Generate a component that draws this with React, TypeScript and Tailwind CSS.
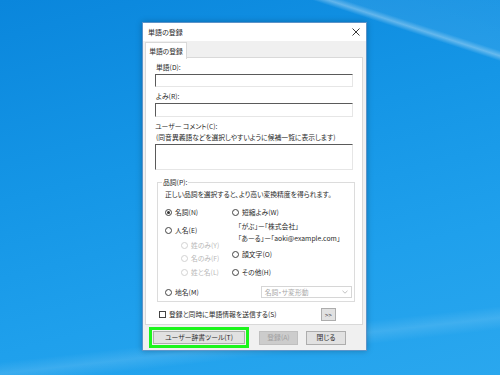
import React from "react";

const F = "[font-family:'Noto_Sans_CJK_JP','Noto_Sans',sans-serif] [font-feature-settings:'palt']";

function Radio({ checked, disabled }: { checked?: boolean; disabled?: boolean }) {
  return (
    <span
      className={`inline-flex items-center justify-center w-[7px] h-[7px] rounded-full border ${
        disabled ? "border-[#d2d2d2]" : "border-[#444]"
      } bg-white shrink-0`}
    >
      {checked && <span className="w-[3px] h-[3px] rounded-full bg-[#333]" />}
    </span>
  );
}

function RadioItem({
  label,
  checked,
  disabled,
  className = "",
}: {
  label: string;
  checked?: boolean;
  disabled?: boolean;
  className?: string;
}) {
  return (
    <div className={`flex items-center h-[9px] gap-[3px] ${className}`}>
      <Radio checked={checked} disabled={disabled} />
      <span className={`leading-[9px] ${disabled ? "text-[#b8b8b8]" : ""}`}>{label}</span>
    </div>
  );
}

function TextBox({ h }: { h: string }) {
  return (
    <div
      className={`${h} w-[198px] ml-[9px] bg-white border border-[#e6e6e6] border-t-[#5a5a5a] border-l-[#5a5a5a] border-t-[1.5px] border-l-[1.5px]`}
    />
  );
}

export default function App() {
  return (
    <div
      className={`w-[500px] h-[375px] overflow-hidden bg-[linear-gradient(18deg,transparent_88.6%,rgba(255,255,255,0.35)_89.6%,rgba(255,255,255,0.08)_90.6%,rgba(255,255,255,0.06)_100%),linear-gradient(173.6deg,transparent_84%,rgba(255,255,255,0.12)_86.7%,transparent_89.5%),linear-gradient(165deg,#0a86dc_0%,#1596e6_40%,#1fa0ec_70%,#2aa7ee_100%)] pl-[142px] pt-[22px] ${F} text-[6.8px] text-[#2a2a2a]`}
    >
      <div className="relative w-[225px] h-[329px] bg-[#f0f0f0] border border-[#5c93c8] shadow-[0_0_6px_rgba(0,0,0,0.25)] flex flex-col">
        {/* title bar */}
        <div className="h-[18px] bg-white flex items-center justify-between pl-[5px] pr-[5px] shrink-0">
          <span className="leading-[9px] text-[7px]">単語の登録</span>
          <svg width="8" height="8" viewBox="0 0 8 8" className="mr-[1px]">
            <path d="M0.5 0.5L7.5 7.5M7.5 0.5L0.5 7.5" stroke="#222" strokeWidth="0.9" />
          </svg>
        </div>
        {/* tab strip */}
        <div className="flex pl-[2px] pt-[1px] h-[17px] shrink-0">
          <div className="w-[42px] h-[17px] bg-white border border-b-0 border-[#d9d9d9] flex items-center justify-center relative z-10">
            <span className="leading-[9px]">単語の登録</span>
          </div>
        </div>
        {/* panel */}
        <div className="ml-[2px] w-[218px] h-[268px] -mt-[1px] bg-white border border-[#d9d9d9] flex flex-col shrink-0">
          <div className="mt-[5px] ml-[10px] h-[9px] leading-[9px]">単語(D):</div>
          <div className="mt-[2px]">
            <TextBox h="h-[13px]" />
          </div>
          <div className="mt-[5px] ml-[10px] h-[9px] leading-[9px]">よみ(R):</div>
          <div className="mt-[2px]">
            <TextBox h="h-[14px]" />
          </div>
          <div className="mt-[5px] ml-[9px] h-[9px] leading-[9px]">ユーザー コメント(C):</div>
          <div className="mt-[2px] ml-[10px] h-[9px] leading-[9px]">(同音異義語などを選択しやすいように候補一覧に表示します)</div>
          <div className="mt-[2px]">
            <TextBox h="h-[26px]" />
          </div>
          {/* group box */}
          <div className="relative mt-[12px] ml-[11px] w-[198px] h-[120px] border border-[#dcdcdc]">
            <span className="absolute -top-[5px] left-[4px] bg-white px-[1px] leading-[9px]">品詞(P):</span>
            <div className="mt-[7px] ml-[7px] h-[9px] leading-[9px]">正しい品詞を選択すると、より高い変換精度を得られます。</div>
            <div className="flex mt-[9px]">
              <div className="w-[74px] pl-[7px] flex flex-col">
                <RadioItem label="名詞(N)" checked />
                <RadioItem label="人名(E)" className="mt-[9px]" />
                <RadioItem label="姓のみ(Y)" disabled className="mt-[6px] ml-[16px]" />
                <RadioItem label="名のみ(F)" disabled className="mt-[4px] ml-[16px]" />
                <RadioItem label="姓と名(L)" disabled className="mt-[5px] ml-[16px]" />
              </div>
              <div className="flex flex-col">
                <RadioItem label="短縮よみ(W)" />
                <div className="mt-[5px] ml-[6px] h-[9px] leading-[9px]">「がぶ」ー「株式会社」</div>
                <div className="mt-[3px] ml-[6px] h-[9px] leading-[9px]">「あーる」ー「aoki@example.com」</div>
                <RadioItem label="顔文字(O)" className="mt-[7px]" />
                <RadioItem label="その他(H)" className="mt-[9px]" />
              </div>
            </div>
            <div className="flex items-center mt-[9px] pl-[7px]">
              <RadioItem label="地名(M)" />
              <div className="ml-[62px] w-[91px] h-[12px] border border-[#d6d6d6] bg-white flex items-center justify-between pl-[3px] pr-[3px]">
                <span className="text-[#a8a8a8] leading-[9px]">名詞・サ変形動</span>
                <svg width="6" height="4" viewBox="0 0 6 4">
                  <path d="M0.5 0.8L3 3.2L5.5 0.8" stroke="#b0b0b0" strokeWidth="0.8" fill="none" />
                </svg>
              </div>
            </div>
          </div>
          {/* checkbox row */}
          <div className="flex items-center mt-[6px] ml-[13px]">
            <span className="w-[7px] h-[7px] border border-[#444] bg-white shrink-0" />
            <span className="ml-[3px] leading-[9px]">登録と同時に単語情報を送信する(S)</span>
            <div className="ml-[44px] w-[15px] h-[13px] bg-[#e1e1e1] border border-[#adadad] flex items-center justify-center text-[6px] leading-[6px] [font-family:'Liberation_Sans',sans-serif]">
              &gt;&gt;
            </div>
          </div>
        </div>
        {/* bottom buttons */}
        <div className="flex items-center h-[25px] pl-[6px]">
          <div className="w-[100px] h-[21px] border-[3px] border-[#1cf51c] flex items-center justify-center">
            <div className="w-[92px] h-[13px] bg-[#e1e1e1] border border-[#adadad] flex items-center justify-center leading-[9px]">
              ユーザー辞書ツール(T)
            </div>
          </div>
          <div className="ml-[10px] w-[39px] h-[14px] bg-[#cccccc] border border-[#bfbfbf] flex items-center justify-center text-[#a0a0a0] leading-[9px]">
            登録(A)
          </div>
          <div className="ml-[8px] w-[40px] h-[14px] bg-[#e1e1e1] border border-[#adadad] flex items-center justify-center leading-[9px]">
            閉じる
          </div>
        </div>
      </div>
    </div>
  );
}
